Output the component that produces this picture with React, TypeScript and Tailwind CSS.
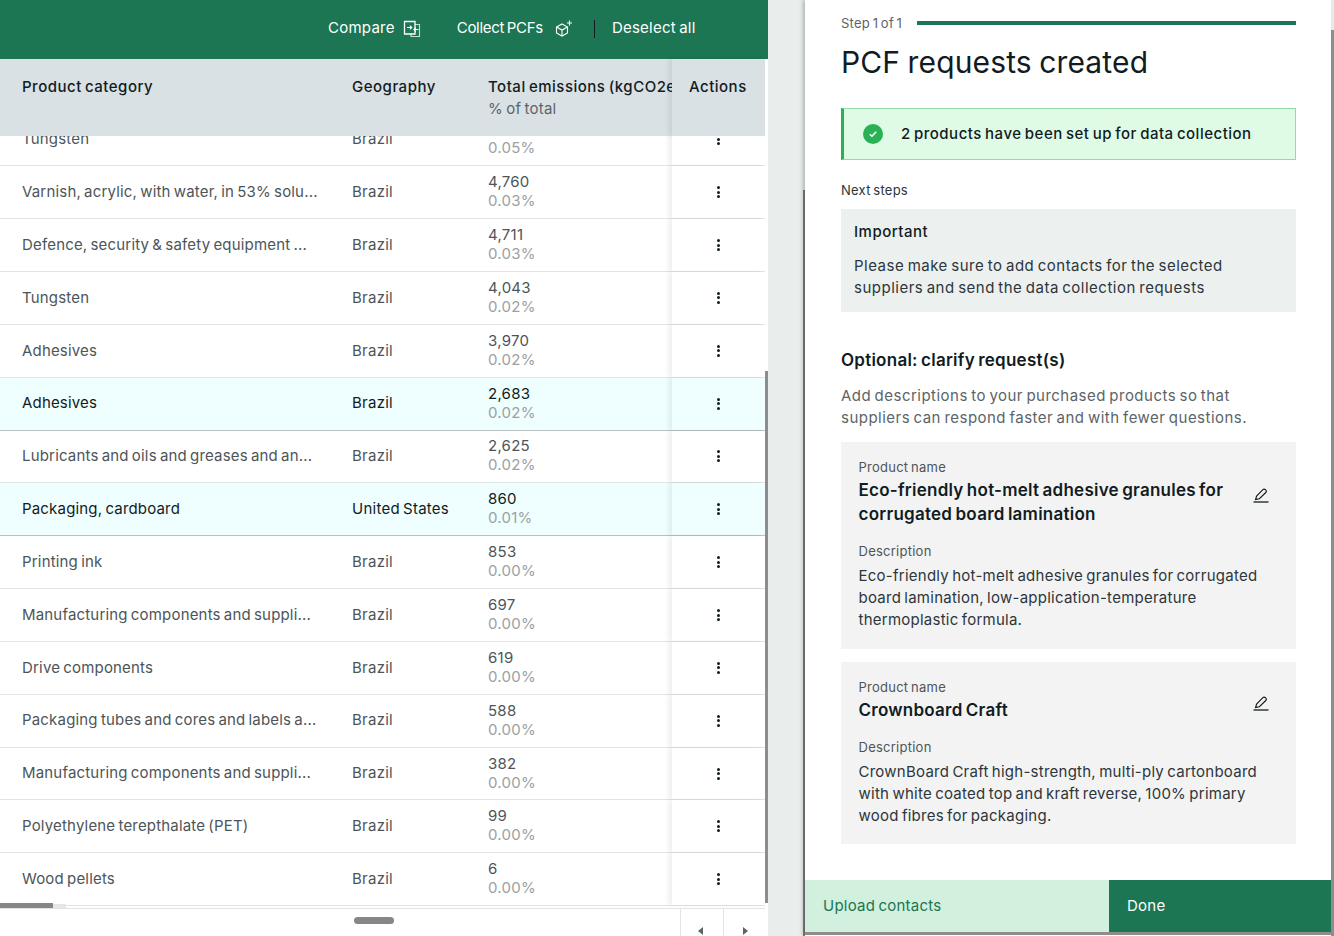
import React from "react";

const rows = [
	{ name: "Tungsten", geo: "Brazil", value: "", pct: "0.05%" },
	{ name: "Varnish, acrylic, with water, in 53% solu...", geo: "Brazil", value: "4,760", pct: "0.03%" },
	{ name: "Defence, security & safety equipment ...", geo: "Brazil", value: "4,711", pct: "0.03%" },
	{ name: "Tungsten", geo: "Brazil", value: "4,043", pct: "0.02%" },
	{ name: "Adhesives", geo: "Brazil", value: "3,970", pct: "0.02%" },
	{ name: "Adhesives", geo: "Brazil", value: "2,683", pct: "0.02%", selected: true },
	{ name: "Lubricants and oils and greases and an...", geo: "Brazil", value: "2,625", pct: "0.02%" },
	{ name: "Packaging, cardboard", geo: "United States", value: "860", pct: "0.01%", selected: true },
	{ name: "Printing ink", geo: "Brazil", value: "853", pct: "0.00%" },
	{ name: "Manufacturing components and suppli...", geo: "Brazil", value: "697", pct: "0.00%" },
	{ name: "Drive components", geo: "Brazil", value: "619", pct: "0.00%" },
	{ name: "Packaging tubes and cores and labels a...", geo: "Brazil", value: "588", pct: "0.00%" },
	{ name: "Manufacturing components and suppli...", geo: "Brazil", value: "382", pct: "0.00%" },
	{ name: "Polyethylene terepthalate (PET)", geo: "Brazil", value: "99", pct: "0.00%" },
	{ name: "Wood pellets", geo: "Brazil", value: "6", pct: "0.00%" },
];

const CompareIcon = () => (
	<svg width="18" height="18" viewBox="0 0 18 18" fill="none" stroke="currentColor" strokeWidth="1.1">
		<path d="M1.5 1.5H12V14H1.5V1.5Z" strokeWidth="1.3" />
		<path d="M12 4.5H16.5V16.5H8V14" strokeOpacity="0.75" />
		<path d="M4 7.5H8.5M6.8 5.6L8.8 7.5L6.8 9.4" />
		<path d="M15.5 9.5H11M12.8 7.6L10.8 9.5L12.8 11.4" />
	</svg>
);

const CubeIcon = () => (
	<svg width="18" height="18" viewBox="0 0 18 18" fill="none" stroke="currentColor" strokeWidth="1.1">
		<path d="M7 4L12.5 7V13L7 16L1.5 13V7L7 4Z" />
		<path d="M1.5 7L7 10L12.5 7M7 10V16" />
		<path d="M14.5 0.5V5.5M12 3H17" />
	</svg>
);

const PenIcon = () => (
	<svg width="16" height="15" viewBox="0 0 16 15" fill="none" stroke="currentColor" strokeWidth="1.15">
		<path d="M2.6 11.4L3.6 8L9.9 1.7C10.6 1 11.7 1 12.6 1.9C13.5 2.8 13.5 3.8 12.8 4.5L6.4 10.7L2.6 11.4Z" />
		<path d="M0.5 14H15.5" strokeWidth="1.3" />
	</svg>
);

const Dots = () => (
	<div className="flex flex-col gap-[1.5px]">
		<span className="w-[3px] h-[3px] rounded-full bg-[#111c22]" />
		<span className="w-[3px] h-[3px] rounded-full bg-[#111c22]" />
		<span className="w-[3px] h-[3px] rounded-full bg-[#111c22]" />
	</div>
);

const ProductCard = ({ title, description, className }: { title: string; description: string; className: string }) => (
	<div className={`bg-[#f3f3f3] pl-[17.5px] pr-[27px] ${className}`}>
		<div className="flex items-center justify-between gap-5">
			<div>
				<p className="text-[13px] leading-[18px] text-[#4d5559]">Product name</p>
				<h3 className="text-[17px] leading-6 font-semibold text-[#111c22] mt-[2px]">{title}</h3>
			</div>
			<div className="text-[#111c22] shrink-0 mt-[7px]"><PenIcon /></div>
		</div>
		<p className="text-[13px] leading-[18px] text-[#4d5559] mt-[16px]">Description</p>
		<p className="text-[15px] leading-[22px] text-[#2d363b] mt-[5px]">{description}</p>
	</div>
);

export default function App() {
	return (
		<div className="w-[1334px] h-[936px] overflow-hidden flex bg-[#e9eeed] text-[#111c22] font-['Inter',sans-serif] tracking-[0.25px] [word-spacing:-1.25px] relative">
			{/* table side */}
			<section className="w-[768px] h-full flex flex-col bg-white relative">
				<div className="h-[59px] bg-[#1c7553] text-white flex items-center text-[15px] pb-[2px] shrink-0">
					<div className="ml-[328px] flex items-center gap-[8px]">
						<span>Compare</span>
						<CompareIcon />
					</div>
					<div className="ml-[36px] flex items-center gap-[12.5px]">
						<span className="tracking-[-0.3px]">Collect PCFs</span>
						<CubeIcon />
					</div>
					<span className="w-px h-[18px] bg-[#111c22] ml-[20.5px]" />
					<span className="ml-[17px]">Deselect all</span>
				</div>

				<div className="w-[765px] h-[77px] shrink-0 bg-[#d9e1e4] flex text-[15px] font-medium tracking-[0.5px]">
					<div className="w-[352px] pl-[22px] pt-[17px] leading-[22px]">Product category</div>
					<div className="w-[136px] pt-[17px] leading-[22px]">Geography</div>
					<div className="w-[184px] pt-[17px] leading-[22px] overflow-hidden whitespace-nowrap">
						<p>Total emissions (kgCO2e)</p>
						<p className="font-normal text-[#5b6468] tracking-[0.25px]">% of total</p>
					</div>
					<div className="w-[93px] pl-[17px] pt-[17px] leading-[22px] shadow-[-4px_0_4px_rgba(0,0,0,0.06)] bg-[#d9e1e4]">Actions</div>
				</div>

				<div className="flex-1 overflow-hidden w-[765px]">
					<div className="-mt-[22.5px]">
						{rows.map((row, i) => (
							<div
								key={i}
								className={`h-[52.85px] flex items-stretch border-b text-[15px] ${row.selected ? "bg-[#effefe] text-[#111c22] border-[#b9c1c3]" : "text-[#4d5559] border-[#dfe5e6]"}`}
							>
								<div className="w-[352px] pl-[22px] flex items-center whitespace-nowrap tracking-[0.18px]">{row.name}</div>
								<div className="w-[136px] flex items-center">{row.geo}</div>
								<div className="w-[184px] flex flex-col justify-center leading-[19px] pb-[2px]">
									<p>{row.value || "\u00a0"}</p>
									<p className="text-[#9aa1a4]">{row.pct}</p>
								</div>
								<div className={`w-[93px] flex items-center justify-center shadow-[-4px_0_4px_rgba(0,0,0,0.06)] ${row.selected ? "bg-[#effefe]" : "bg-white"}`}>
									<Dots />
								</div>
							</div>
						))}
					</div>
				</div>

				<div className="h-[28px] w-[765px] shrink-0 border-t border-[#dfe5e6] flex relative">
					<div className="flex-1" />
					<div className="w-[43px] border-l border-[#dfe5e6] flex items-end justify-center pb-[1px] pr-[4px]">
						<span className="w-0 h-0 border-y-[4.5px] border-y-transparent border-r-[5px] border-r-[#5b6468]" />
					</div>
					<div className="w-[42px] border-l border-[#dfe5e6] flex items-end justify-center pb-[1px] pl-[2px]">
						<span className="w-0 h-0 border-y-[4.5px] border-y-transparent border-l-[5px] border-l-[#5b6468]" />
					</div>
					<span className="absolute left-[354px] top-[8px] w-[40px] h-[7px] rounded-full bg-[#868686]" />
				</div>

				{/* overlay scrollbars */}
				<span className="absolute left-0 top-[903px] w-[53px] h-[5px] bg-[#868686]" />
				<span className="absolute left-[53px] top-[904px] w-[13px] h-[4px] bg-[#e6e6e6]" />
				<span className="absolute left-[765px] top-[371px] w-[3px] h-[532px] bg-[#8d8d8d]" />
			</section>

			<div className="w-[37px] relative">
				<span className="absolute right-0 top-[190px] w-[2px] h-[746px] bg-[#808080]" />
			</div>

			{/* drawer */}
			<aside className="w-[526px] h-full bg-white flex flex-col shadow-[-2px_0_4px_rgba(0,0,0,0.25)] relative">
				<div className="flex-1 pl-9 pr-[35px]">
					<div className="flex items-center gap-[15px] pt-[14px]">
						<span className="text-[13px] leading-[18px] text-[#5b6468]">Step 1 of 1</span>
						<div className="flex-1 h-1 bg-[#1c7553]" />
					</div>
					<h1 className="text-[30px] leading-10 mt-[10px] text-[#111c22] tracking-[0.15px]">PCF requests created</h1>

					<div className="h-[52px] mt-[26px] bg-[#dffbe6] border border-[#8fdca8] border-l-[3px] border-l-[#2bb155] flex items-center pl-[19px]">
						<span className="w-5 h-5 rounded-full bg-[#2bb155] flex items-center justify-center">
							<svg width="12" height="12" viewBox="0 0 12 12" fill="none" stroke="white" strokeWidth="1.5">
								<path d="M2.8 6.2L5 8.3L9.2 3.8" />
							</svg>
						</span>
						<span className="ml-[18px] text-[15px] font-medium tracking-[0.5px]">2 products have been set up for data collection</span>
					</div>

					<p className="text-[13px] leading-[18px] mt-[21px] text-[#2d363b]">Next steps</p>
					<div className="h-[103px] mt-[10px] bg-[#ecf0ef] pl-[13px] pr-10 pt-3">
						<p className="text-[15px] leading-[22px] font-medium tracking-[0.5px]">Important</p>
						<p className="text-[15px] leading-[22px] mt-[12px] text-[#2d363b] tracking-[0.5px]">Please make sure to add contacts for the selected suppliers and send the data collection requests</p>
					</div>

					<h2 className="text-[17px] leading-6 font-semibold mt-[36px]">Optional: clarify request(s)</h2>
					<p className="text-[15px] leading-[22px] text-[#5b6468] mt-[13px] pr-10 tracking-[0.48px]">Add descriptions to your purchased products so that suppliers can respond faster and with fewer questions.</p>

					<ProductCard
						className="h-[207px] mt-[13px] pt-4"
						title="Eco-friendly hot-melt adhesive granules for corrugated board lamination"
						description="Eco-friendly hot-melt adhesive granules for corrugated board lamination, low-application-temperature thermoplastic formula."
					/>
					<ProductCard
						className="h-[182px] mt-[13px] pt-4"
						title="Crownboard Craft"
						description="CrownBoard Craft high-strength, multi-ply cartonboard with white coated top and kraft reverse, 100% primary wood fibres for packaging."
					/>
				</div>

				<div className="h-[52px] flex text-[15px] shrink-0">
					<div className="w-[304px] bg-[#d1f0dd] text-[#1c7553] flex items-center pl-[18px]">Upload contacts</div>
					<div className="flex-1 bg-[#1c7553] text-white flex items-center pl-[18px]">Done</div>
				</div>
				<div className="h-[4px] shrink-0 bg-white">
					<div className="h-[3px] bg-[#8d8d8d]" />
				</div>
			</aside>

			<span className="absolute right-0 top-[30px] w-[3px] h-[906px] bg-[#8d8d8d]" />
		</div>
	);
}
